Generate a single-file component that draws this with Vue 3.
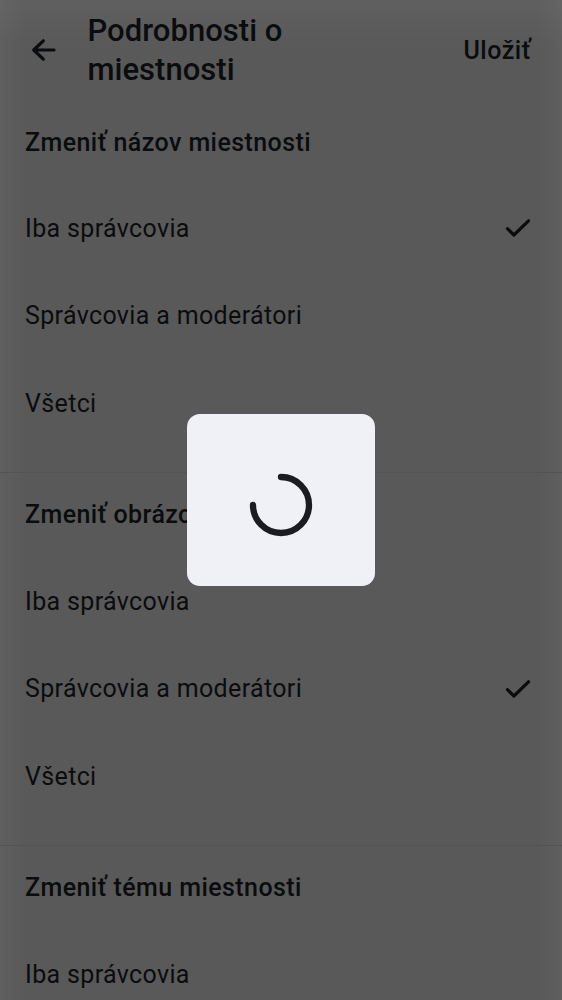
<script setup>
const options = ['Iba správcovia', 'Správcovia a moderátori', 'Všetci']
const sections = [
  { title: 'Zmeniť názov miestnosti', selected: 0, options },
  { title: 'Zmeniť obrázok miestnosti', selected: 1, options },
  { title: 'Zmeniť tému miestnosti', selected: 1, options: options.slice(0, 1) },
]
</script>

<template>
  <div class="screen">
    <header class="bar">
      <svg class="back" width="38" height="38" viewBox="0 0 38 38"><path d="M18.3 9.8 8.7 19l9.6 9.2M8.9 19h20.1" /></svg>
      <h1>Podrobnosti o miestnosti</h1>
      <button class="save">Uložiť</button>
    </header>
    <main>
      <section v-for="s in sections" :key="s.title">
        <h2>{{ s.title }}</h2>
        <div v-for="(o, i) in s.options" :key="o" class="row">
          <span>{{ o }}</span>
          <svg v-if="i === s.selected" width="26" height="20" viewBox="0 0 26 20"><path d="M2.5 10.7l6.4 6.3L23.5 2.8" /></svg>
        </div>
      </section>
    </main>
    <div class="overlay">
      <div class="dialog">
        <svg width="64" height="64" viewBox="0 0 64 64"><path d="M32 4a28 28 0 1 1-28 28" /></svg>
      </div>
    </div>
  </div>
</template>

<style>
body { margin: 0; overflow: hidden; }
</style>

<style scoped>
.screen { position: relative; height: 1000px; overflow: hidden; background: linear-gradient(90deg, #ffffff09, #fff0 26px, #fff0 536px, #ffffff09), linear-gradient(#ffffff0a, #fff0 46px), #595959; color: #0b0c0e; font-family: Roboto, sans-serif; }
svg { fill: none; stroke: currentColor; stroke-width: 3.2; stroke-linecap: round; stroke-linejoin: round; }
.bar { display: flex; align-items: center; height: 100px; box-sizing: border-box; padding: 0 31px 0 25px; }
.back { flex: none; }
h1 { margin: 0 0 0 24.5px; width: 250px; font-size: 31px; line-height: 39px; font-weight: 500; letter-spacing: .03px; }
.save { margin-left: auto; padding: 0; border: 0; background: none; color: inherit; font: 500 25px/33px Roboto, sans-serif; letter-spacing: .5px; }
section { height: 372.9px; box-sizing: border-box; border-bottom: 1px solid #535353; padding: 25.5px 31px 0 25px; }
h2 { margin: 0 0 25px; font-size: 25px; line-height: 34px; font-weight: 500; letter-spacing: .42px; }
.row { display: flex; align-items: center; justify-content: space-between; height: 87.5px; font-size: 25px; letter-spacing: .35px; }
.overlay { position: absolute; inset: 0; display: grid; place-items: center; }
.dialog { display: grid; place-items: center; width: 188px; height: 172px; padding-top: 9px; box-sizing: border-box; border-radius: 13px; background: #f0f1f6; color: #1b1c22; }
.dialog svg { stroke-width: 6.3; }
</style>
